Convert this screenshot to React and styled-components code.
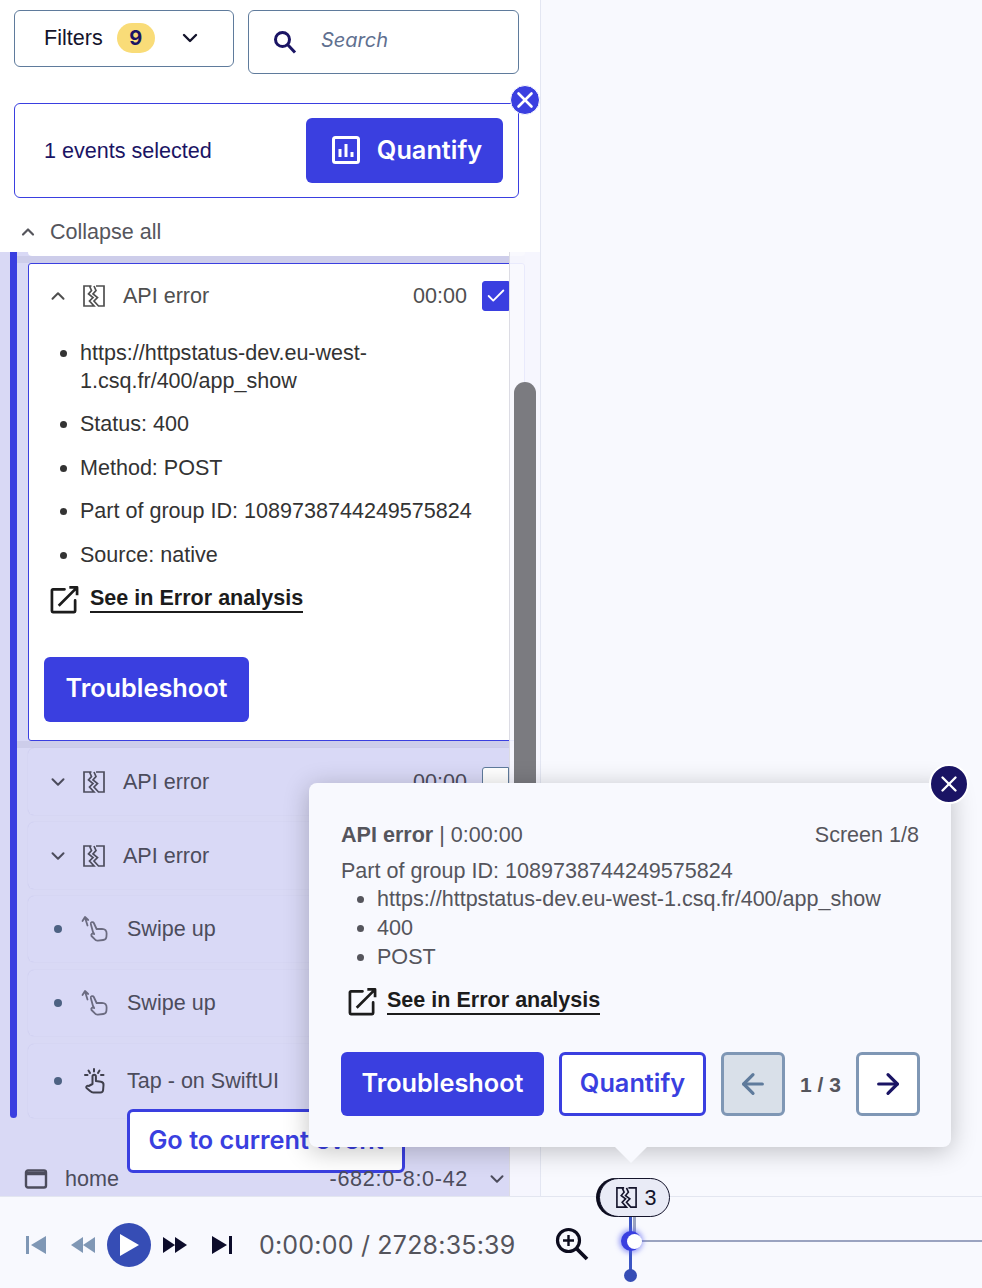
import React from 'react';
import styled, { createGlobalStyle } from 'styled-components';
import { ChevronDown, ChevronUp, X, Check, ArrowLeft, ArrowRight } from 'lucide-react';

const GlobalStyle = createGlobalStyle`
  html, body { margin: 0; padding: 0; }
  body {
    background: #f8f9fe;
    font-family: "Liberation Sans", Arial, sans-serif;
    font-size: 21.55px;
    color: #4f4f4f;
  }
  * { box-sizing: border-box; }
`;

const Page = styled.div`
  width: 982px;
  height: 1288px;
  position: relative;
  overflow: hidden;
  display: flex;
  flex-direction: column;
`;

const Main = styled.div`
  height: 1196px;
  display: flex;
`;

const Sidebar = styled.aside`
  width: 541px;
  height: 100%;
  display: flex;
  flex-direction: column;
  border-right: 1px solid #e3e6f2;
`;

const SidebarHeader = styled.div`
  height: 252px;
  flex: none;
  background: #fff;
  padding: 10px 21px 0 14px;
  position: relative;
`;

const TopRow = styled.div`
  display: flex;
  align-items: flex-start;
  gap: 14px;
`;

const FilterBox = styled.div`
  width: 220px;
  height: 57px;
  border: 1px solid #5f7b9c;
  border-radius: 6px;
  display: flex;
  align-items: center;
  padding: 0 0 1px 29px;
  color: #14142b;
  background: #fff;
`;

const Badge = styled.span`
  width: 38px;
  height: 30px;
  margin-left: 14px;
  border-radius: 15px;
  background: #f9dc78;
  color: #1a1464;
  font-family: Inter, "Liberation Sans", sans-serif;
  font-weight: 700;
  font-size: 20px;
  display: flex;
  align-items: center;
  justify-content: center;
`;

const FilterChevron = styled(ChevronDown)`
  margin-left: 23px;
  color: #14142b;
`;

const SearchBox = styled.div`
  width: 271px;
  height: 64px;
  border: 1px solid #5f7b9c;
  border-radius: 6px;
  display: flex;
  align-items: center;
  padding-left: 24px;
  color: #1a1464;
`;

const SearchText = styled.span`
  margin-left: 24px;
  font-family: Inter, "Liberation Sans", sans-serif;
  font-style: italic;
  font-size: 20px;
  color: #5f7090;
  margin-bottom: 4px;
`;

const SelectionCard = styled.div`
  margin-top: 29px;
  width: 505px;
  height: 95px;
  border: 1px solid #3a3fe0;
  border-radius: 6px;
  display: flex;
  align-items: center;
  justify-content: space-between;
  padding: 0 15px 0 29px;
  position: relative;
`;

const SelectionText = styled.span`
  color: #1a1464;
`;

const Button = styled.button`
  height: ${p => p.$h || 65}px;
  width: ${p => p.$w}px;
  border-radius: 6px;
  border: ${p => (p.$outline ? '3px solid #3a3fe0' : 'none')};
  background: ${p => (p.$outline ? '#fff' : '#3a3fe0')};
  color: ${p => (p.$outline ? '#3a3fe0' : '#fff')};
  font-family: Inter, "Liberation Sans", sans-serif;
  font-size: 25.3px;
  font-weight: 600;
  line-height: 28px;
  display: flex;
  align-items: center;
  justify-content: center;
  gap: 16px;
  padding: 0 0 2px ${p => p.$shift || 0}px;
  flex: none;
`;

const CloseDot = styled.span`
  position: absolute;
  top: -19px;
  right: -22px;
  width: 30px;
  height: 30px;
  border-radius: 50%;
  background: #3a3fe0;
  border: 1px solid #fff;
  color: #fff;
  display: flex;
  align-items: center;
  justify-content: center;
`;

const CollapseRow = styled.div`
  margin-top: 20px;
  padding-left: 4px;
  display: flex;
  align-items: center;
  gap: 12px;
  height: 28px;
  color: #55555c;
`;

const ListArea = styled.div`
  flex: 1;
  position: relative;
  overflow: hidden;
  background: #d9d9f5;
  display: flex;
  padding-left: 10px;
`;

const ProgressBar = styled.div`
  width: 7px;
  height: 866px;
  flex: none;
  background: #3a3fe0;
  border-radius: 0 0 4px 4px;
`;

const ListColumn = styled.div`
  margin-left: 11px;
  width: 497px;
  display: flex;
  flex-direction: column;
  flex: none;
`;

const CardRest = styled.div`
  height: 4px;
  background: #fff;
  border-radius: 0 0 6px 6px;
`;

const Band = styled.div`
  height: 7px;
  margin: 0 0 0 -11px;
  background: #cdcdea;
`;

const SelectedCard = styled.div`
  height: 478px;
  background: #fff;
  border: 1px solid #3a3fe0;
  border-radius: 3px;
  padding: 0 15px;
`;

const EventRow = styled.div`
  height: ${p => p.$h || 66}px;
  flex: none;
  display: flex;
  align-items: center;
  padding: 0 16px 0 ${p => p.$pad || 19}px;
  background: #d9d9f6;
  border-radius: 6px;
  box-shadow: 0 0 1px rgba(70, 70, 160, 0.18);
  margin-bottom: ${p => p.$gap ?? 8}px;
  color: #4c4c5c;
`;

const CardHead = styled.div`
  height: 64px;
  display: flex;
  align-items: center;
  padding-left: 3px;
  color: #4f4f4f;
`;

const IconSlot = styled.span`
  width: ${p => p.$w || 24}px;
  margin-left: ${p => p.$ml || 13}px;
  display: flex;
  justify-content: center;
  flex: none;
  color: ${p => p.$color || 'currentColor'};
`;

const RowLabel = styled.span`
  margin-left: ${p => p.$ml || 17}px;
  flex: 1;
`;

const RowTime = styled.span`
  margin-right: 15px;
`;

const CheckBox = styled.span`
  width: 27px;
  height: 30px;
  flex: none;
  border-radius: 3px 0 0 3px;
  border: 1px solid #5f7b9c;
  background: ${p => (p.$on ? '#3a3fe0' : '#fff')};
  border-color: ${p => (p.$on ? '#3a3fe0' : '#5f7b9c')};
  color: #fff;
  display: flex;
  align-items: center;
  justify-content: center;
`;

const Dot = styled.span`
  width: 8px;
  height: 8px;
  border-radius: 50%;
  background: #4d6283;
  flex: none;
`;

const DetailList = styled.ul`
  margin: 11px 0 0;
  padding-left: 36px;
  line-height: 28px;
  color: #333;
  li { margin-bottom: 15.4px; width: 372px; white-space: pre-line; }
  li:last-child { margin-bottom: 0; width: 420px; }
  li.wide { width: 430px; }
`;

const LinkRow = styled.div`
  display: flex;
  align-items: flex-start;
  gap: ${p => p.$gap || 11}px;
  margin: ${p => p.$m || '16px 0 0 6px'};
  color: #1c1c1c;
`;

const LinkText = styled.a`
  font-weight: 700;
  line-height: 26px;
  border-bottom: 2px solid #1c1c1c;
`;

const TroubleWrap = styled.div`
  margin-top: 43px;
`;

const GoToButton = styled(Button)`
  position: absolute;
  left: 127px;
  top: 857px;
`;

const HomeRow = styled.div`
  position: absolute;
  left: 24px;
  top: 912px;
  width: 486px;
  height: 30px;
  display: flex;
  align-items: center;
  color: #4c4c5c;
`;

const HomeLabel = styled.span`
  margin-left: 17px;
  flex: 1;
`;

const HomeTime = styled.span`
  letter-spacing: 0.7px;
`;

const HomeChevron = styled(ChevronDown)`
  margin: 0 2px 0 18px;
`;

const ScrollTrack = styled.div`
  position: absolute;
  top: 0;
  bottom: 0;
  left: 509px;
  width: 31px;
  background: rgba(248, 249, 254, 0.92);
  border-left: 1px solid #dcdce4;
`;

const ScrollThumb = styled.div`
  position: absolute;
  left: 4px;
  top: 130px;
  width: 22px;
  height: 720px;
  background: #7b7b80;
  border-radius: 11px;
`;

const Player = styled.footer`
  height: 92px;
  flex: none;
  background: #f8f9fe;
  border-top: 1px solid #e3e6f0;
  display: flex;
  align-items: center;
  padding: 4px 0 0 25px;
  position: relative;
`;

const PlayerIcon = styled.svg`
  flex: none;
  margin-left: ${p => p.$ml || 0}px;
`;

const PlayButton = styled.span`
  width: 44px;
  height: 44px;
  margin-left: 11px;
  border-radius: 50%;
  background: #364db5;
  display: flex;
  align-items: center;
  justify-content: center;
  flex: none;
`;

const TimeText = styled.span`
  margin-left: 26px;
  font-family: Inter, "Liberation Sans", sans-serif;
  font-size: 25px;
  letter-spacing: 0.2px;
  color: #54545c;
  white-space: nowrap;
`;

const ZoomIcon = styled.svg`
  margin-left: 40px;
  margin-bottom: 2px;
  color: #0c0c1e;
  flex: none;
`;

const TimelineLine = styled.div`
  position: absolute;
  left: 640px;
  right: 0;
  top: 43px;
  height: 2px;
  background: #9aa3c0;
`;

const PlayLine = styled.div`
  position: absolute;
  left: 629px;
  top: 20px;
  width: 3px;
  height: 60px;
  background: #3b55c4;
`;

const GreyLine = styled.div`
  position: absolute;
  left: 633px;
  top: 20px;
  width: 3px;
  height: 24px;
  background: #9aa3c0;
`;

const PlayDot = styled.div`
  position: absolute;
  left: 624px;
  top: 72px;
  width: 13px;
  height: 13px;
  border-radius: 50%;
  background: #364db5;
`;

const Handle = styled.div`
  position: absolute;
  left: 621px;
  top: 34px;
  width: 20px;
  height: 20px;
  border-radius: 50%;
  background: #3a3fe0;
  box-shadow: 0 0 5px 2px rgba(80, 90, 240, 0.55);
  &::after {
    content: '';
    position: absolute;
    left: 6px;
    top: 3px;
    width: 15px;
    height: 15px;
    border-radius: 50%;
    background: #fff;
  }
`;

const MarkerPill = styled.div`
  position: absolute;
  left: 599px;
  top: -19px;
  width: 71px;
  height: 39px;
  border-radius: 20px;
  background: #e9ebf6;
  border: 1px solid #14142b;
  box-shadow: -3px 0 0 #0c0c1e;
  display: flex;
  align-items: center;
  justify-content: center;
  gap: 7px;
  color: #14142b;
  padding-left: 2px;
`;

const Popover = styled.div`
  position: absolute;
  left: 309px;
  top: 783px;
  width: 642px;
  height: 364px;
  background: #f8f9fe;
  border-radius: 8px;
  box-shadow: 0 4px 26px rgba(0, 0, 0, 0.24);
  padding: 40px 32px 0;
  line-height: 29px;
  color: #55555c;
  &::after {
    content: '';
    position: absolute;
    left: 306px;
    bottom: -16px;
    border-left: 16px solid transparent;
    border-right: 16px solid transparent;
    border-top: 16px solid #f8f9fe;
  }
`;

const PopClose = styled.span`
  position: absolute;
  top: -19px;
  right: -18px;
  width: 40px;
  height: 40px;
  border-radius: 50%;
  border: 2px solid #fff;
  background: #1a1464;
  color: #fff;
  display: flex;
  align-items: center;
  justify-content: center;
`;

const PopHead = styled.div`
  display: flex;
  justify-content: space-between;
  margin-bottom: 9px;
  line-height: 24px;
`;

const PopTitle = styled.b`
  font-weight: 700;
`;

const PopList = styled.ul`
  margin: -1px 0 0;
  padding-left: 36px;
`;

const PopActions = styled.div`
  margin-top: 36px;
  display: flex;
  align-items: center;
  gap: 15px;
`;

const NavButton = styled.span`
  width: 64px;
  height: 64px;
  border-radius: 6px;
  border: 3px solid #7f97b5;
  background: ${p => (p.$off ? '#d9e0e9' : '#fff')};
  color: ${p => (p.$off ? '#5f7b9c' : '#1a1464')};
  display: flex;
  align-items: center;
  justify-content: center;
  flex: none;
`;

const Pager = styled.span`
  font-weight: 700;
  font-size: 21px;
  width: 41px;
  text-align: center;
  white-space: nowrap;
`;

const CrackIcon = ({ size = 24 }) => (
  <svg width={size} height={size} viewBox="0 0 24 24" fill="none" stroke="currentColor" strokeWidth="1.7">
    <path d="M9.500 2H2v20h10L7.500 17l3.500-3.500L6.500 10l3-3.500L7.500 2" />
    <path d="M14 2h8v20h-5.500L12 17l3.500-3.500L11 10l3-3.500L12 2" />
  </svg>
);

const BarsIcon = () => (
  <svg width="30" height="30" viewBox="0 0 30 30" fill="none" stroke="#fff" strokeWidth="3">
    <rect x="2.5" y="2.5" width="25" height="25" rx="2" />
    <path d="M9 14v8M15 9v13M21 17v5" />
  </svg>
);

const LinkIcon = () => (
  <svg width="29" height="29" viewBox="0 0 30 30" fill="none" stroke="currentColor" strokeWidth="2.8" strokeLinecap="round" strokeLinejoin="round">
    <path d="M15 4.500H3a1 1 0 0 0-1 1V27a1 1 0 0 0 1 1h22a1 1 0 0 0 1-1V16" />
    <path d="M20 2.500h8v8M28 2.500L9 21.500" strokeLinecap="butt" />
  </svg>
);

const SearchGlyph = () => (
  <svg width="24" height="24" viewBox="0 0 24 24" fill="none" stroke="currentColor" strokeWidth="3">
    <circle cx="9.500" cy="9.500" r="7" />
    <path d="M14.500 14.500L22 22.500" />
  </svg>
);

const SwipeIcon = () => (
  <svg width="28" height="28" viewBox="0 0 28 28" fill="none" stroke="currentColor" strokeWidth="1.8" strokeLinecap="round" strokeLinejoin="round">
    <path d="M1.500 6L4 2l3.200 3M4 2.500l2.500 8" />
    <path d="M12 17L9.800 9a1.600 1.600 0 0 1 3-1l2.800 6 5.400-.2c3 0 4.800 2 4.600 5l-.2 3.200c-.2 1.800-1.500 2.800-3.200 3l-5.300.6c-1.500.2-2.400-.3-3.200-1.400L10.500 21a1.700 1.700 0 0 1 2.700-2z" />
  </svg>
);

const TapIcon = () => (
  <svg width="26" height="28" viewBox="0 0 26 28" fill="none" stroke="currentColor" strokeWidth="2" strokeLinecap="round" strokeLinejoin="round">
    <path d="M12 2v2.500M6.500 3.500l1.500 2.500M17.500 3.500l-1.500 2.500M3 8h2.500M19 8h2.500" />
    <path d="M10.500 17V9.500a1.700 1.700 0 0 1 3.400 0V14l5 .8c1.800.3 2.800 1.500 2.600 3.200l-.4 5c-.1 1.500-1.200 2.500-2.700 2.500h-7.200c-1.200 0-2-.4-2.800-1.300L4.500 21c-1-1.300.8-3 2.200-2z" />
  </svg>
);

const WindowIcon = () => (
  <svg width="24" height="22" viewBox="0 0 24 22" fill="none" stroke="currentColor" strokeWidth="2.400">
    <rect x="2" y="2.500" width="20" height="17" rx="2" />
    <path d="M2 5.500h20" strokeWidth="3.500" />
  </svg>
);

const events = [
  { id: 1, kind: 'error', label: 'API error', h: 67 },
  { id: 2, kind: 'error', label: 'API error', h: 67 },
  { id: 3, kind: 'swipe', label: 'Swipe up', h: 66 },
  { id: 4, kind: 'swipe', label: 'Swipe up', h: 66 },
  { id: 5, kind: 'tap', label: 'Tap - on SwiftUI', h: 74 },
];

const EventItem = ({ item }) => {
  if (item.kind === 'error') {
    return (
      <EventRow $h={item.h} $gap={7}>
        <ChevronDown size={22} strokeWidth={2.2} />
        <IconSlot><CrackIcon /></IconSlot>
        <RowLabel>{item.label}</RowLabel>
        <RowTime>00:00</RowTime>
        <CheckBox />
      </EventRow>
    );
  }
  return (
    <EventRow $h={item.h} $pad={26} $gap={item.id === 5 ? 0 : 8}>
      <Dot />
      <IconSlot $w={28} $ml={19} $color={item.kind === 'swipe' ? '#6b6b80' : '#3f3f4c'}>
        {item.kind === 'swipe' ? <SwipeIcon /> : <TapIcon />}
      </IconSlot>
      <RowLabel $ml={18}>{item.label}</RowLabel>
    </EventRow>
  );
};

const App = () => (
  <Page>
    <GlobalStyle />
    <Main>
      <Sidebar>
        <SidebarHeader>
          <TopRow>
            <FilterBox>
              Filters
              <Badge>9</Badge>
              <FilterChevron size={24} strokeWidth={2.4} />
            </FilterBox>
            <SearchBox>
              <SearchGlyph />
              <SearchText>Search</SearchText>
            </SearchBox>
          </TopRow>
          <SelectionCard>
            <SelectionText>1 events selected</SelectionText>
            <Button $w={197} $shift={4}><BarsIcon />Quantify</Button>
            <CloseDot><X size={26} strokeWidth={2.4} /></CloseDot>
          </SelectionCard>
          <CollapseRow>
            <ChevronUp size={20} strokeWidth={2.6} />
            Collapse all
          </CollapseRow>
        </SidebarHeader>
        <ListArea>
          <ProgressBar />
          <ListColumn>
            <CardRest />
            <Band />
            <SelectedCard>
              <CardHead>
                <ChevronUp size={22} strokeWidth={2.2} />
                <IconSlot><CrackIcon /></IconSlot>
                <RowLabel>API error</RowLabel>
                <RowTime>00:00</RowTime>
                <CheckBox $on><Check size={22} strokeWidth={2} /></CheckBox>
              </CardHead>
              <DetailList>
                <li>{'https://httpstatus-dev.eu-west-\n1.csq.fr/400/app_show'}</li>
                <li>Status: 400</li>
                <li>Method: POST</li>
                <li className="wide">Part of group ID: 1089738744249575824</li>
                <li>Source: native</li>
              </DetailList>
              <LinkRow>
                <LinkIcon />
                <LinkText>See in Error analysis</LinkText>
              </LinkRow>
              <TroubleWrap>
                <Button $w={205}>Troubleshoot</Button>
              </TroubleWrap>
            </SelectedCard>
            <Band />
            {events.map(item => <EventItem key={item.id} item={item} />)}
          </ListColumn>
          <GoToButton $outline $w={278} $h={64}>Go to current event</GoToButton>
          <HomeRow>
            <WindowIcon />
            <HomeLabel>home</HomeLabel>
            <HomeTime>-682:0-8:0-42</HomeTime>
            <HomeChevron size={22} strokeWidth={2.2} />
          </HomeRow>
          <ScrollTrack>
            <ScrollThumb />
          </ScrollTrack>
        </ListArea>
      </Sidebar>
    </Main>
    <Player>
      <PlayerIcon width="22" height="20" viewBox="0 0 22 20" fill="#7f97b5">
        <path d="M1 1h3v18H1zM21 1v18L6 10z" />
      </PlayerIcon>
      <PlayerIcon $ml={23} width="26" height="18" viewBox="0 0 26 18" fill="#7f97b5">
        <path d="M13 1v16L1 9zM25 1v16L13 9z" />
      </PlayerIcon>
      <PlayButton>
        <svg width="20" height="22" viewBox="0 0 20 22" fill="#fff"><path d="M1 0l19 11L1 22z" /></svg>
      </PlayButton>
      <PlayerIcon $ml={11} width="26" height="18" viewBox="0 0 26 18" fill="#0c0c2a">
        <path d="M1 1v16l12-8zM13 1v16l12-8z" />
      </PlayerIcon>
      <PlayerIcon $ml={23} width="22" height="20" viewBox="0 0 22 20" fill="#0c0c2a">
        <path d="M18 1h3v18h-3zM1 1v18l15-9z" />
      </PlayerIcon>
      <TimeText>0:00:00 / 2728:35:39</TimeText>
      <ZoomIcon width="34" height="34" viewBox="0 0 34 34" fill="none" stroke="currentColor" strokeWidth="3.200">
        <circle cx="13.500" cy="13.500" r="11" />
        <path d="M13.500 8v11M8 13.500h11" strokeWidth="2.400" />
        <path d="M21.500 21.500L32 32" strokeWidth="3.800" />
      </ZoomIcon>
      <TimelineLine />
      <GreyLine />
      <PlayLine />
      <PlayDot />
      <Handle />
      <MarkerPill><CrackIcon size={23} />3</MarkerPill>
    </Player>
    <Popover>
      <PopClose><X size={26} strokeWidth={2.2} /></PopClose>
      <PopHead>
        <span><PopTitle>API error</PopTitle> | 0:00:00</span>
        <span>Screen 1/8</span>
      </PopHead>
      <div>Part of group ID: 1089738744249575824</div>
      <PopList>
        <li>https://httpstatus-dev.eu-west-1.csq.fr/400/app_show</li>
        <li>400</li>
        <li>POST</li>
      </PopList>
      <LinkRow $gap={10} $m="16px 0 0 7px">
        <LinkIcon />
        <LinkText>See in Error analysis</LinkText>
      </LinkRow>
      <PopActions>
        <Button $w={203} $h={64}>Troubleshoot</Button>
        <Button $outline $w={147} $h={64}>Quantify</Button>
        <NavButton $off><ArrowLeft size={32} strokeWidth={2.4} /></NavButton>
        <Pager>1 / 3</Pager>
        <NavButton><ArrowRight size={32} strokeWidth={2.4} /></NavButton>
      </PopActions>
    </Popover>
  </Page>
);

export default App;
